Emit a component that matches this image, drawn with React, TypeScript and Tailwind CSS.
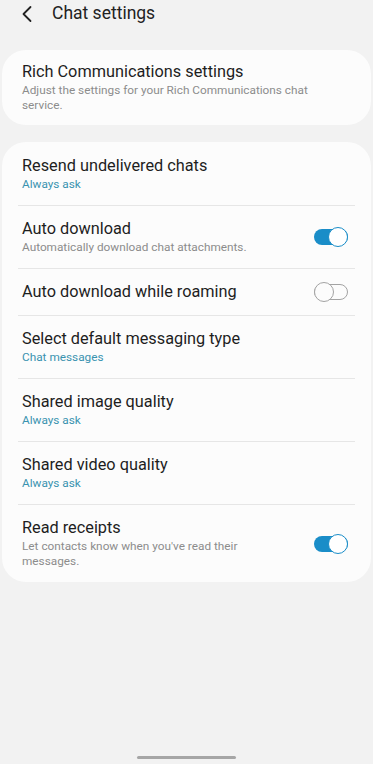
import React from 'react';

type Row = {
  title: string;
  sub?: string;
  accent?: boolean;
  toggle?: 'on' | 'off';
};

const rows: Row[] = [
  { title: 'Resend undelivered chats', sub: 'Always ask', accent: true },
  { title: 'Auto download', sub: 'Automatically download chat attachments.', toggle: 'on' },
  { title: 'Auto download while roaming', toggle: 'off' },
  { title: 'Select default messaging type', sub: 'Chat messages', accent: true },
  { title: 'Shared image quality', sub: 'Always ask', accent: true },
  { title: 'Shared video quality', sub: 'Always ask', accent: true },
  { title: 'Read receipts', sub: "Let contacts know when you've read their messages.", toggle: 'on' },
];

const Toggle = ({ on }: { on: boolean }) => (
  <div className="relative w-[34px] h-[20px] shrink-0 flex items-center">
    <div
      className={
        on
          ? 'w-full h-[16px] rounded-full bg-[#1a8dc8]'
          : 'w-full h-[16px] rounded-full border-[1.5px] border-[#a3a3a3]'
      }
    />
    <div
      className={
        on
          ? 'absolute right-0 top-0 w-[20px] h-[20px] rounded-full bg-white border-[1.5px] border-[#1a8dc8]'
          : 'absolute left-0 top-0 w-[20px] h-[20px] rounded-full bg-[#fcfcfc] border-[1.5px] border-[#a3a3a3]'
      }
    />
  </div>
);

export default function App() {
  return (
    <div
      className="w-[373px] h-[764px] bg-[#f2f2f2] flex flex-col text-[#1e1e1e] overflow-hidden"
      style={{ fontFamily: 'Roboto, "Noto Sans", sans-serif' }}
    >
      {/* Header */}
      <div className="h-[28px] flex items-center">
        <svg width="12" height="18" viewBox="0 0 12 18" className="ml-[21px]" fill="none">
          <path d="M9.5 2 L2.5 9 L9.5 16" stroke="#222" strokeWidth="1.8" strokeLinecap="round" strokeLinejoin="round" />
        </svg>
        <div className="ml-[19px] text-[17.5px] leading-none text-[#222]">Chat settings</div>
      </div>

      {/* Rich Communications card */}
      <div className="mt-[22px] mx-[2px] bg-[#fcfcfc] rounded-[24px] px-[20px] pt-[12px] pb-[12px]">
        <div className="text-[16.3px] leading-[20px]">Rich Communications settings</div>
        <div className="mt-[1px] text-[11.8px] leading-[15px] text-[#8c8c8c] pr-[40px]">
          Adjust the settings for your Rich Communications chat service.
        </div>
      </div>

      {/* Settings list */}
      <div className="mt-[17px] mx-[2px] bg-[#fcfcfc] rounded-[24px] flex flex-col pt-px">
        {rows.map((r, i) => (
          <div key={r.title} className="flex flex-col">
            {i > 0 && <div className="mx-[16px] h-px bg-[#e6e6e6]" />}
            <div className="flex items-center pl-[20px] pr-[23px] py-[13px]">
              <div className="flex-1 min-w-0 pr-[50px]">
                <div className="text-[16.3px] leading-[20px]">{r.title}</div>
                {r.sub && (
                  <div
                    className={
                      r.accent
                        ? 'mt-[1px] text-[11.8px] leading-[15px] text-[#3a93b0]'
                        : 'mt-[1px] text-[11.8px] leading-[15px] text-[#8c8c8c]'
                    }
                  >
                    {r.sub}
                  </div>
                )}
              </div>
              {r.toggle && <Toggle on={r.toggle === 'on'} />}
            </div>
          </div>
        ))}
      </div>

      <div className="flex-1" />
      {/* Home indicator */}
      <div className="flex justify-center pb-[5px]">
        <div className="w-[99px] h-[3px] rounded-full bg-[#a6a6a6]" />
      </div>
    </div>
  );
}
